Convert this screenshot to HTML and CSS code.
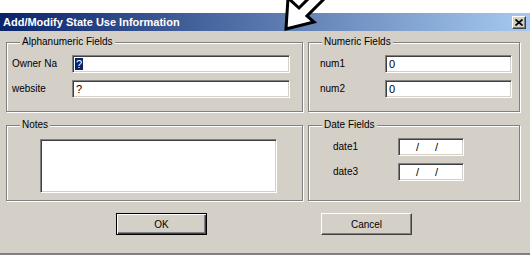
FILE: index.html
```html
<html>
  <head>
    <meta charset="UTF-8" />
    <link rel="stylesheet" href="styles.css">
  </head>
  <body>
    <!-- pointer drawn over the screenshot -->
    <svg class="pointer" width="530" height="40" viewBox="0 0 530 40">
      <polygon points="286,29 288,-2 299,8 310,-3 326,-3 307,16 314,22" />
    </svg>

    <div class="window">
      <div class="titlebar">
        <span class="title">Add/Modify State Use Information</span>
        <div class="close">
          <svg width="8" height="7" viewBox="0 0 8 7"><path d="M0.5 0.5 L7.5 6.5 M7.5 0.5 L0.5 6.5" /></svg>
        </div>
      </div>

      <div class="dialog">
        <div class="groups">
          <fieldset class="group">
            <legend>Alphanumeric Fields</legend>
            <div class="fields alpha">
              <div class="label">Owner Na</div>
              <div class="edit"><span class="sel">?</span></div>
              <div class="label">website</div>
              <div class="edit">?</div>
            </div>
          </fieldset>

          <fieldset class="group">
            <legend>Numeric Fields</legend>
            <div class="fields numeric">
              <div class="label">num1</div>
              <div class="edit">0</div>
              <div class="label">num2</div>
              <div class="edit">0</div>
            </div>
          </fieldset>

          <fieldset class="group">
            <legend>Notes</legend>
            <div class="notes">
              <div class="edit memo"></div>
            </div>
          </fieldset>

          <fieldset class="group">
            <legend>Date Fields</legend>
            <div class="fields dates">
              <div class="label">date1</div>
              <div class="edit date"><span>/</span><span>/</span></div>
              <div class="label">date3</div>
              <div class="edit date"><span>/</span><span>/</span></div>
            </div>
          </fieldset>
        </div>

        <div class="buttons">
          <div class="btn default">OK</div>
          <div class="btn">Cancel</div>
        </div>
      </div>
    </div>
  </body>
</html>
```

FILE: styles.css
```css
body, html {
  margin: 0;
  padding: 0;
  background: #fff;
  font-family: "Liberation Sans", Arial, sans-serif;
  font-size: 10px;
  color: #000;
}

body {
  width: 530px;
  height: 255px;
  overflow: hidden;
}

.pointer {
  position: absolute;
  top: 0;
  left: 0;
  z-index: 2;
}

.pointer polygon {
  fill: #fff;
  stroke: #000;
  stroke-width: 3;
  stroke-linejoin: miter;
}

.window {
  margin-top: 13px;
  height: 242px;
  display: flex;
  flex-direction: column;
}

.titlebar {
  height: 18px;
  flex: none;
  display: flex;
  align-items: center;
  justify-content: space-between;
  padding: 0 4px 0 3px;
  background: linear-gradient(to right, #0a246a, #a6caf0);
}

.title {
  color: #fff;
  font-weight: bold;
  font-size: 11px;
}

.close {
  width: 12px;
  height: 11px;
  background: #d4d0c8;
  border: 1px solid;
  border-color: #fff #404040 #404040 #fff;
  box-shadow: inset -1px -1px 0 #808080;
  display: flex;
  align-items: center;
  justify-content: center;
}

.close path {
  stroke: #000;
  stroke-width: 1.7;
  fill: none;
}

.dialog {
  flex: 1;
  background: #d4d0c8;
  border-bottom: 2px solid #808080;
  padding: 5px 10px 0 6px;
}

.groups {
  display: grid;
  grid-template-columns: 297px 212px;
  column-gap: 5px;
  row-gap: 7px;
}

.group {
  margin: 0;
  padding: 0;
  min-width: 0;
  border: 1px solid #808080;
  box-shadow: inset 1px 1px 0 #fff, 1px 1px 0 #fff;
}

.group legend {
  margin-left: 13px;
  padding: 0 2px;
  line-height: 12px;
  background: #d4d0c8;
}

.fields {
  display: grid;
  row-gap: 7px;
  align-items: center;
  padding: 7px 0 13px 0;
}

.fields .label {
  margin-top: -2px;
}

.alpha {
  grid-template-columns: 60px 218px;
  padding-left: 5px;
}

.numeric {
  grid-template-columns: 65px 127px;
  padding-left: 11px;
}

.dates {
  grid-template-columns: 65px 66px;
  padding-left: 24px;
}

.edit {
  height: 16px;
  box-sizing: content-box;
  background: #fff;
  border: 1px solid;
  border-color: #808080 #fff #fff #808080;
  box-shadow: inset 1px 1px 0 #404040, inset -1px -1px 0 #d4d0c8;
  padding-left: 3px;
  line-height: 16px;
  font-size: 11px;
}

.fields .edit {
  height: 16px;
}

.sel {
  background: #0a246a;
  color: #fff;
  padding: 0 1px;
  margin-left: -1px;
}

.date {
  display: flex;
  gap: 16px;
  padding-left: 17px;
}

.notes {
  padding: 8px 0 7px 33px;
}

.memo {
  width: 232px;
  height: 52px;
}

.buttons {
  display: flex;
  gap: 114px;
  padding-left: 110px;
  margin-top: 12px;
}

.btn {
  width: 89px;
  height: 20px;
  box-sizing: content-box;
  border: 1px solid;
  border-color: #fff #404040 #404040 #fff;
  box-shadow: inset -1px -1px 0 #808080;
  display: flex;
  align-items: center;
  justify-content: center;
  font-size: 10px;
}

.btn.default {
  border-color: #000;
  box-shadow: inset 1px 1px 0 #fff, inset -1px -1px 0 #404040, inset -2px -2px 0 #808080;
}
```
